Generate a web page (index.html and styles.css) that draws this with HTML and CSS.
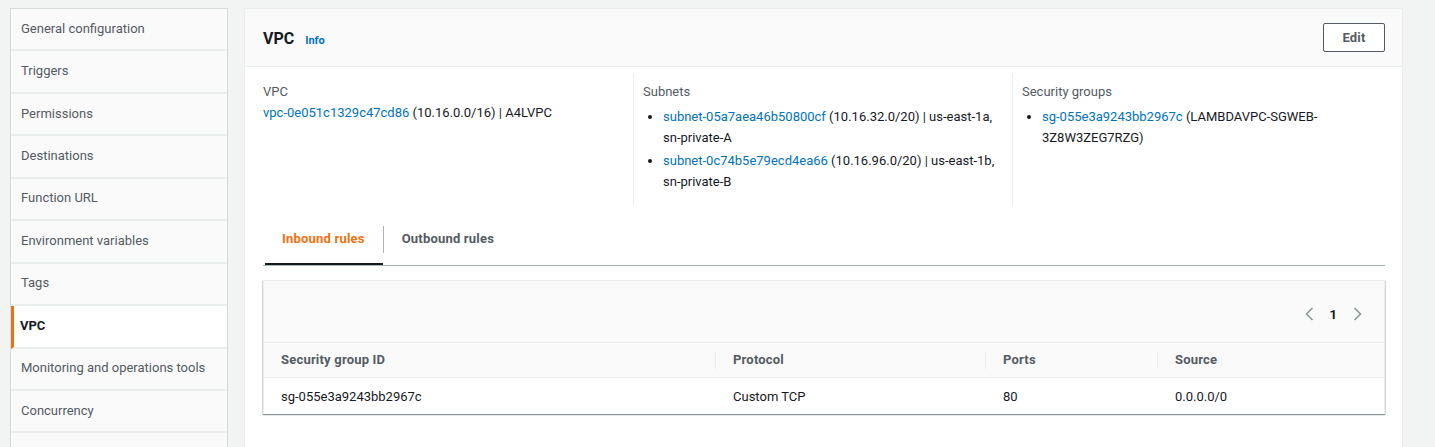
FILE: index.html
```html
<!DOCTYPE html>
<html lang="en">
<head>
<meta charset="utf-8">
<title>VPC configuration</title>
<link rel="stylesheet" href="styles.css">
</head>
<body>
<div class="page">
  <nav class="sidenav">
    <div class="nav-item">General configuration</div>
    <div class="nav-item">Triggers</div>
    <div class="nav-item">Permissions</div>
    <div class="nav-item">Destinations</div>
    <div class="nav-item">Function URL</div>
    <div class="nav-item">Environment variables</div>
    <div class="nav-item">Tags</div>
    <div class="nav-item active">VPC</div>
    <div class="nav-item">Monitoring and operations tools</div>
    <div class="nav-item">Concurrency</div>
    <div class="nav-item"></div>
  </nav>
  <main class="panel">
    <header class="panel-header">
      <div class="title">
        <h2>VPC</h2>
        <a class="info" href="#">Info</a>
      </div>
      <button class="btn">Edit</button>
    </header>
    <div class="panel-body">
      <div class="columns">
        <div class="col">
          <div class="label">VPC</div>
          <div class="value"><a href="#">vpc-0e051c1329c47cd86</a> (10.16.0.0/16) | A4LVPC</div>
        </div>
        <div class="col">
          <div class="label">Subnets</div>
          <ul class="list">
            <li><a href="#">subnet-05a7aea46b50800cf</a> (10.16.32.0/20) | us-east-1a, sn-private-A</li>
            <li><a href="#">subnet-0c74b5e79ecd4ea66</a> (10.16.96.0/20) | us-east-1b, sn-private-B</li>
          </ul>
        </div>
        <div class="col">
          <div class="label">Security groups</div>
          <ul class="list">
            <li><a href="#">sg-055e3a9243bb2967c</a> (LAMBDAVPC-SGWEB-<wbr>3Z8W3ZEG7RZG)</li>
          </ul>
        </div>
      </div>
      <div class="tabs">
        <div class="tab active">Inbound rules</div>
        <div class="tab">Outbound rules</div>
      </div>
      <div class="table-box">
        <div class="table-tools">
          <div class="pager">
            <svg class="chev" width="10" height="14" viewBox="0 0 10 14"><path d="M8.5 1 L2.5 7 L8.5 13" fill="none" stroke="#879596" stroke-width="1.5"/></svg>
            <span class="page-num">1</span>
            <svg class="chev" width="10" height="14" viewBox="0 0 10 14"><path d="M1.5 1 L7.5 7 L1.5 13" fill="none" stroke="#879596" stroke-width="1.5"/></svg>
          </div>
        </div>
        <table class="rules">
          <thead>
            <tr>
              <th class="c1">Security group ID</th>
              <th class="c2">Protocol</th>
              <th class="c3">Ports</th>
              <th class="c4">Source</th>
            </tr>
          </thead>
          <tbody>
            <tr>
              <td class="first">sg-055e3a9243bb2967c</td>
              <td>Custom TCP</td>
              <td>80</td>
              <td>0.0.0.0/0</td>
            </tr>
          </tbody>
        </table>
      </div>
    </div>
  </main>
</div>
</body>
</html>
```

FILE: styles.css
```css
* { box-sizing: border-box; }

html, body {
  margin: 0;
  padding: 0;
  height: 447px;
  overflow: hidden;
  background: #f2f3f3;
  font-family: Roboto, "Liberation Sans", sans-serif;
  font-size: 13px;
  color: #16191f;
}

a { color: #0073bb; text-decoration: none; }

.page {
  display: flex;
  align-items: flex-start;
  gap: 16px;
  padding: 8px 0 0 10px;
}

/* ---------- side navigation ---------- */
.sidenav {
  width: 218px;
  flex: none;
  border: 1px solid #d5dbdb;
  border-bottom: none;
  background: #fafafa;
}

.nav-item {
  height: 42.45px;
  display: flex;
  align-items: center;
  padding: 0 0 2px 10px;
  color: #545b64;
  background: #fafafa;
  border-bottom: 2px solid #eaeded;
}

.nav-item.active {
  background: #fff;
  color: #16191f;
  font-weight: 700;
  border-left: 3px solid #ec7211;
  padding-left: 6px;
}

/* ---------- main panel ---------- */
.panel {
  width: 1159px;
  flex: none;
  height: 460px;
  background: #fff;
  border: 1px solid #eaeded;
  border-bottom: none;
}

.panel-header {
  height: 58px;
  display: flex;
  align-items: center;
  justify-content: space-between;
  padding: 0 17px 0 18px;
  background: #fafafa;
  border-bottom: 1px solid #eaeded;
}

.title {
  display: flex;
  align-items: baseline;
  gap: 11px;
  padding-top: 1px;
}

.title h2 {
  margin: 0;
  font-size: 16px;
  font-weight: 700;
  color: #16191f;
}

.info {
  font-size: 11px;
  font-weight: 700;
}

.btn {
  width: 62px;
  height: 29px;
  border: 1px solid #545b64;
  border-radius: 2px;
  background: #fff;
  color: #545b64;
  font-family: inherit;
  font-size: 13px;
  font-weight: 700;
  letter-spacing: 0.2px;
}

.panel-body {
  padding: 6px 17px 0 18px;
}

.columns {
  display: grid;
  grid-template-columns: 370px 379px 1fr;
}

.col {
  padding: 9px 10px 10px 0;
  min-height: 132px;
}

.col + .col {
  border-left: 1px solid #eaeded;
  padding-left: 9px;
}

.label {
  color: #545b64;
  line-height: 20px;
}

.value {
  line-height: 21px;
}

.list {
  margin: 4px 0 0;
  padding: 0 0 0 20px;
}

.list li {
  line-height: 21px;
  margin-bottom: 2px;
}

/* ---------- tabs ---------- */
.tabs {
  display: flex;
  margin-top: 11px;
  padding-left: 2px;
  border-bottom: 1px solid #aab7b8;
}

.tab {
  position: relative;
  height: 49px;
  padding: 13px 18px 0 17px;
  line-height: 20px;
  font-weight: 700;
  letter-spacing: 0.2px;
  color: #545b64;
}

.tab.active {
  color: #ec7211;
  border-bottom: 2px solid #16191f;
}

.tab.active::after {
  content: "";
  position: absolute;
  right: -1px;
  top: 10px;
  height: 27px;
  border-right: 1px solid #aab7b8;
}

.tab + .tab {
  padding-left: 19px;
}

/* ---------- table ---------- */
.table-box {
  margin-top: 14px;
  border: 1px solid #eaeded;
  border-bottom: none;
  box-shadow: 0 1px 1px 0 rgba(0, 28, 36, 0.3), 1px 1px 1px 0 rgba(0, 28, 36, 0.12), -1px 1px 1px 0 rgba(0, 28, 36, 0.12);
}

.table-tools {
  height: 62px;
  display: flex;
  align-items: center;
  justify-content: flex-end;
  padding-right: 21px;
  background: #fafafa;
  border-bottom: 1px solid #eaeded;
}

.pager {
  display: flex;
  align-items: center;
  gap: 16px;
  margin-top: 5px;
}

.page-num {
  font-weight: 700;
  color: #16191f;
}

.rules {
  width: 100%;
  border-collapse: collapse;
  table-layout: fixed;
}

.rules th {
  position: relative;
  height: 34px;
  text-align: left;
  font-weight: 700;
  letter-spacing: 0.2px;
  color: #545b64;
  background: #fafafa;
  padding: 0 0 0 18px;
  border-bottom: 1px solid #eaeded;
}

.rules th.c1,
.rules td.first {
  padding-left: 17px;
}

.rules th + th::before {
  content: "";
  position: absolute;
  left: 0;
  top: 9px;
  height: 17px;
  border-left: 1px solid #eaeded;
}

.rules .c1 { width: 451px; }
.rules .c2 { width: 270px; }
.rules .c3 { width: 172px; }

.rules td {
  height: 37px;
  padding: 2px 0 0 18px;
  color: #16191f;
}
```
